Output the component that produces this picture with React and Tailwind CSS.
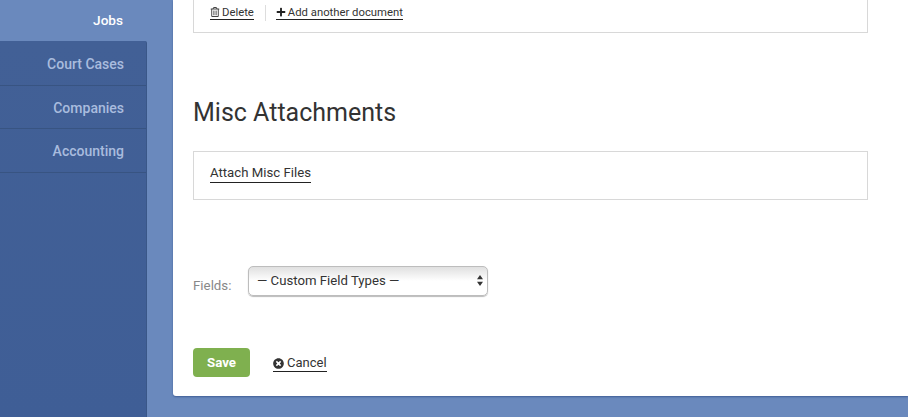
import { FaRegTrashAlt, FaPlus, FaTimesCircle } from "react-icons/fa";

const navItems = [
  { label: "Court Cases", height: "h-[45px]" },
  { label: "Companies", height: "h-[43px]" },
  { label: "Accounting", height: "h-[44px]" },
];

export default function App() {
  return (
    <div className="flex h-[417px] w-[908px] overflow-hidden bg-[#6a89bd] font-['Roboto',sans-serif]">
      <aside className="flex w-[173px] shrink-0 flex-col">
        <div className="flex h-[41px] w-[147px] items-center justify-end pr-[24px] text-[13.6px] font-medium text-white">
          Jobs
        </div>
        <nav className="flex w-[147px] flex-1 flex-col rounded-tr-[2px] border-r border-[#3a5788] bg-gradient-to-b from-[#426096] to-[#3f5e96]">
          {navItems.map((item) => (
            <a
              key={item.label}
              className={`flex ${item.height} items-center justify-end border-b border-[#385482] pr-[22px] pt-[2px] text-[14px] font-medium text-[#a9bcde]`}
            >
              {item.label}
            </a>
          ))}
        </nav>
      </aside>

      <main className="flex h-[396px] flex-1 flex-col rounded-bl-[3px] bg-white pl-[20px] shadow-[0_1px_2px_#3f5e96]">
        <div className="flex h-[33px] w-[675px] items-start border-x border-b border-[#d8d8d8] pl-[16px] pt-[5px] text-[11.3px] text-[#333333]">
          <a className="flex h-[15px] items-center gap-[2px] border-b border-[#222222] pt-[2px]">
            <FaRegTrashAlt className="mb-[2px] h-[10px] w-[10px] text-[#444444]" />
            Delete
          </a>
          <span className="ml-[11px] h-[16px] w-px bg-[#dddddd]" />
          <a className="ml-[10px] flex h-[15px] items-center gap-[2px] border-b border-[#222222] pt-[2px]">
            <FaPlus className="mb-[2px] h-[10px] w-[10px] text-[#222222]" />
            Add another document
          </a>
        </div>

        <h2 className="mt-[65px] text-[25px] leading-[30px] font-normal text-[#333333]">
          Misc Attachments
        </h2>

        <div className="mt-[23px] flex h-[49px] w-[675px] items-start border border-[#d8d8d8] pl-[16px] pt-[12px]">
          <a className="border-b border-[#222222] pb-[1px] text-[13.2px] leading-[17px] text-[#333333]">
            Attach Misc Files
          </a>
        </div>

        <div className="mt-[66px] flex items-start">
          <label className="mt-[12px] w-[55px] text-[13.3px] leading-[16px] text-[#888888]">Fields:</label>
          <div className="relative flex h-[30px] w-[240px] items-center rounded-[5px] border border-[#bdbdbd] bg-gradient-to-b from-[#e0e0e0] via-white to-white pl-[8px] text-[13.2px] text-[#333333] shadow-[0_1px_1px_#bbbbbb]">
            — Custom Field Types —
            <svg className="absolute right-[4px] top-[8px]" width="6" height="11" viewBox="0 0 6 11">
              <path d="M3 0 L6 4.2 H0 Z M0 6.8 H6 L3 11 Z" fill="#333333" />
            </svg>
          </div>
        </div>

        <div className="mt-[52px] flex items-start">
          <button className="flex h-[29px] w-[57px] items-center justify-center rounded-[4px] bg-[#7fb04f] text-[13.3px] font-bold text-white">
            Save
          </button>
          <a className="ml-[23px] mt-[6px] flex items-center gap-[3px] border-b border-[#222222] pt-[1px] text-[13px] leading-[16px] text-[#333333]">
            <FaTimesCircle className="h-[11px] w-[11px] text-[#333333]" />
            Cancel
          </a>
        </div>
      </main>
    </div>
  );
}
